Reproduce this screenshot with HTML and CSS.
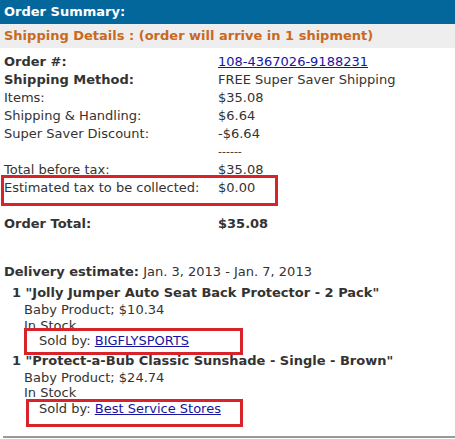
FILE: index.html
```html
<!DOCTYPE html>
<html>
<head>
<meta charset="utf-8">
<link rel="stylesheet" href="styles.css">
</head>
<body>
<div class="page">
  <div class="header">Order Summary:</div>
  <div class="subheader">Shipping Details : (order will arrive in 1 shipment)</div>
  <div class="summary">
    <div class="b">Order #:</div><div><a href="#">108-4367026-9188231</a></div>
    <div class="b">Shipping Method:</div><div>FREE Super Saver Shipping</div>
    <div>Items:</div><div>$35.08</div>
    <div>Shipping &amp; Handling:</div><div>$6.64</div>
    <div>Super Saver Discount:</div><div>-$6.64</div>
    <div></div><div class="dash">------</div>
    <div>Total before tax:</div><div>$35.08</div>
    <div>Estimated tax to be collected:</div><div>$0.00</div>
    <div class="gap"></div><div class="gap"></div>
    <div class="b">Order Total:</div><div class="b">$35.08</div>
  </div>
  <div class="delivery"><span class="b">Delivery estimate:</span> Jan. 3, 2013 - Jan. 7, 2013</div>
  <div class="item">
    <div class="title">1 "Jolly Jumper Auto Seat Back Protector - 2 Pack"</div>
    <div class="line">Baby Product; $10.34</div>
    <div class="line">In Stock</div>
    <div class="line sold">Sold by: <a href="#">BIGFLYSPORTS</a></div>
  </div>
  <div class="item">
    <div class="title">1 "Protect-a-Bub Classic Sunshade - Single - Brown"</div>
    <div class="line">Baby Product; $24.74</div>
    <div class="line">In Stock</div>
    <div class="line sold">Sold by: <a href="#">Best Service Stores</a></div>
  </div>
  <div class="rule"></div>
  <div class="mark mark-tax"></div>
  <div class="mark mark-seller1"></div>
  <div class="mark mark-seller2"></div>
</div>
</body>
</html>
```

FILE: styles.css
```css
html, body {
  margin: 0;
  padding: 0;
  background: #fff;
}
.page {
  position: relative;
  width: 455px;
  height: 439px;
  overflow: hidden;
  font-family: "DejaVu Sans", Verdana, sans-serif;
  font-size: 13px;
  color: #333;
}
a {
  color: #1515a0;
  text-decoration: underline;
}
.b {
  font-weight: bold;
}
.header {
  background: #03679c;
  color: #fff;
  font-weight: bold;
  height: 24px;
  line-height: 24px;
  padding-left: 4px;
}
.subheader {
  background: #eeeeee;
  color: #c9691f;
  font-weight: bold;
  height: 24px;
  line-height: 24px;
  padding-left: 4px;
}
.summary {
  display: grid;
  grid-template-columns: 214px auto;
  line-height: 18px;
  padding-left: 4px;
  margin-top: 5px;
}
.summary .gap {
  height: 18px;
}
.dash {
  font-size: 11px;
}
.delivery {
  padding-left: 4px;
  line-height: 18px;
  margin-top: 30px;
}
.item {
  padding-left: 12px;
  margin-top: 3px;
}
.item .title {
  font-weight: bold;
  line-height: 18px;
}
.item .line {
  padding-left: 12px;
  line-height: 15.6px;
}
.item .sold {
  padding-left: 27px;
}
.rule {
  margin: 19px 0 0 3px;
  border-top: 2px solid #999;
}
.mark {
  position: absolute;
  border: 3px solid #d9232b;
  box-sizing: border-box;
}
.mark-tax {
  left: 1px;
  top: 175px;
  width: 277px;
  height: 31px;
}
.mark-seller1 {
  left: 24px;
  top: 328px;
  width: 219px;
  height: 27px;
}
.mark-seller2 {
  left: 26px;
  top: 399px;
  width: 217px;
  height: 28px;
}
```
